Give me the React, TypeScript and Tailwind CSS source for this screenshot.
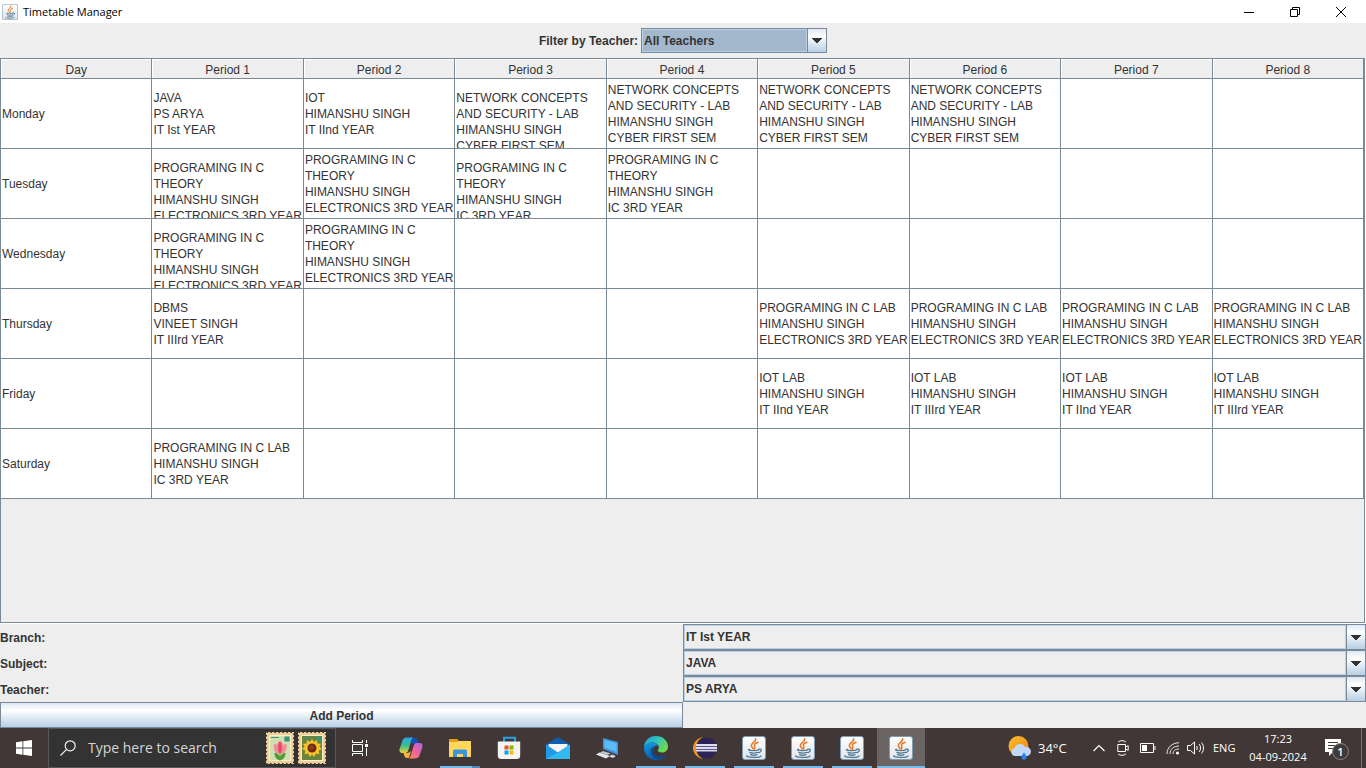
import React from "react";

const DAYS = ["Monday", "Tuesday", "Wednesday", "Thursday", "Friday", "Saturday"];
const PERIODS = [1, 2, 3, 4, 5, 6, 7, 8];

type Entry = { lines: string[]; spill?: boolean };

const LAB = ["NETWORK CONCEPTS", "AND SECURITY - LAB", "HIMANSHU SINGH", "CYBER FIRST SEM"];
const C_THEORY = ["PROGRAMING IN C", "THEORY", "HIMANSHU SINGH", "ELECTRONICS 3RD YEAR"];
const C_THEORY_IC = ["PROGRAMING IN C", "THEORY", "HIMANSHU SINGH", "IC 3RD YEAR"];
const C_LAB = ["PROGRAMING IN C LAB", "HIMANSHU SINGH", "ELECTRONICS 3RD YEAR"];
const IOT_2 = ["IOT LAB", "HIMANSHU SINGH", "IT IInd YEAR"];
const IOT_3 = ["IOT LAB", "HIMANSHU SINGH", "IT IIIrd YEAR"];

const SCHEDULE: Record<string, Record<number, Entry>> = {
  Monday: {
    1: { lines: ["JAVA", "PS ARYA", "IT Ist YEAR"] },
    2: { lines: ["IOT", "HIMANSHU SINGH", "IT IInd YEAR"] },
    3: { lines: LAB, spill: true },
    4: { lines: LAB },
    5: { lines: LAB },
    6: { lines: LAB },
  },
  Tuesday: {
    1: { lines: C_THEORY, spill: true },
    2: { lines: C_THEORY },
    3: { lines: C_THEORY_IC, spill: true },
    4: { lines: C_THEORY_IC },
  },
  Wednesday: {
    1: { lines: C_THEORY, spill: true },
    2: { lines: C_THEORY },
  },
  Thursday: {
    1: { lines: ["DBMS", "VINEET SINGH", "IT IIIrd YEAR"] },
    5: { lines: C_LAB },
    6: { lines: C_LAB },
    7: { lines: C_LAB },
    8: { lines: C_LAB },
  },
  Friday: {
    5: { lines: IOT_2 },
    6: { lines: IOT_3 },
    7: { lines: IOT_2 },
    8: { lines: IOT_3 },
  },
  Saturday: {
    1: { lines: ["PROGRAMING IN C LAB", "HIMANSHU SINGH", "IC 3RD YEAR"] },
  },
};

function JavaIcon({ className }: { className: string }) {
  return (
    <svg viewBox="0 0 24 24" className={className} aria-hidden="true">
      <defs>
        <linearGradient id="javaTile" x1="0" y1="0" x2="0" y2="1">
          <stop offset="0" stopColor="#ffffff" />
          <stop offset="1" stopColor="#dfe5ea" />
        </linearGradient>
      </defs>
      <rect x="0.5" y="0.5" width="23" height="23" rx="2.5" fill="url(#javaTile)" stroke="#7f9db5" />
      <path d="M13.6 2.8c1.200 2.700-4.400 3.900-4.300 6.600 0 1.300 1.400 2.300 2 3.400M16 6.300c-2 .8-4.100 2-3.500 3.600.4.9 1.100 1.600-.2 3" fill="none" stroke="#e8761f" strokeWidth="1.500" strokeLinecap="round" />
      <path d="M7.500 13.300c-2 .6-1.200 1.300 4.200 1.300 2 0 3.900-.2 5-.7M7.900 16.300c2 .9 6 .8 8 .1M8.600 18.600c1.700.7 4.600.7 6.400.1M16.800 13.200c2.800-.8 3.700 2 .1 3.400M5 19.800c-1.800 1.900 13.200 2.200 14 .1" fill="none" stroke="#4f7896" strokeWidth="1.300" strokeLinecap="round" />
    </svg>
  );
}

function Combo({ id, options, selected = false }: { id: string; options: string[]; selected?: boolean }) {
  return (
    <div className="relative flex h-full w-full border border-[#7a8a99]">
      <select
        id={id}
        className={
          selected
            ? "w-full appearance-none border border-[#b8cfe5] bg-[#a3b8cc] pl-px text-xs font-bold text-[#333] outline-none"
            : "w-full appearance-none border border-[#b8cfe5] bg-[#eee] pl-px text-xs font-bold text-[#333] outline-none"
        }
      >
        {options.map((o) => (
          <option key={o}>{o}</option>
        ))}
      </select>
      <span className="pointer-events-none absolute inset-y-0 right-0 flex w-[19px] items-center justify-center border-l border-[#7a8a99] bg-linear-to-b from-[#dde8f3] via-white via-30% to-[#b8cfe5] shadow-[-1px_0_0_#b8cfe5]">
        <svg viewBox="0 0 10 5" className="h-[5px] w-2.5" aria-hidden="true">
          <path d="M0 0h10v1H9v1H8v1H7v1H6v1H4V4H3V3H2V2H1V1H0z" fill="#333" />
        </svg>
      </span>
    </div>
  );
}

function TitleBar() {
  return (
    <header className="flex h-[23px] shrink-0 items-center bg-white pl-0.5 pr-0.5 font-['Open_Sans',sans-serif] text-black">
      <JavaIcon className="size-4" />
      <h1 className="ml-[5px] flex-1 text-[11px] leading-4">Timetable Manager</h1>
      <button aria-label="Minimize" className="flex h-5 w-[46px] items-center justify-center">
        <svg viewBox="0 0 10 10" className="size-2.5" shapeRendering="crispEdges"><path d="M0 5h10v1H0z" /></svg>
      </button>
      <button aria-label="Restore" className="flex h-5 w-[46px] items-center justify-center">
        <svg viewBox="0 0 10 10" className="size-2.5" fill="none" stroke="#000"><path d="M.5 2.500h7v7h-7zM2.500 2.500v-2h7v7h-2" /></svg>
      </button>
      <button aria-label="Close" className="flex h-5 w-[46px] items-center justify-center">
        <svg viewBox="0 0 10 10" className="size-2.5" fill="none" stroke="#000"><path d="M0 0l10 10M10 0L0 10" /></svg>
      </button>
    </header>
  );
}

function Timetable() {
  return (
    <main className="flex flex-1 border-b border-r border-white">
      <div className="flex-1 border border-[#7a8a99]">
        <table className="w-full table-fixed border-separate border-spacing-0 text-xs">
          <thead>
            <tr>
              <th className="h-5 border-b border-r border-[#7a8a99] p-0 pt-0.5 font-normal leading-4 shadow-[inset_1px_1px_0_#fff]">Day</th>
              {PERIODS.map((p) => (
                <th key={p} className="h-5 border-b border-r border-[#7a8a99] p-0 pt-0.5 font-normal leading-4 shadow-[inset_1px_1px_0_#fff]">
                  Period {p}
                </th>
              ))}
            </tr>
          </thead>
          <tbody className="bg-white">
            {DAYS.map((day) => (
              <tr key={day}>
                <th scope="row" className="h-[70px] border-b border-r border-[#7a8a99] p-0 pl-px text-left align-middle font-normal leading-4">
                  {day}
                </th>
                {PERIODS.map((p) => {
                  const entry = SCHEDULE[day][p];
                  return (
                    <td key={p} className="h-[70px] border-b border-r border-[#7a8a99] p-0 pl-px">
                      {entry && (
                        <div className="flex h-[69px] items-center overflow-hidden">
                          <div className={entry.spill ? "h-12 whitespace-nowrap leading-4" : "whitespace-nowrap leading-4"}>
                            {entry.lines.map((line) => (
                              <p key={line}>{line}</p>
                            ))}
                          </div>
                        </div>
                      )}
                    </td>
                  );
                })}
              </tr>
            ))}
          </tbody>
        </table>
      </div>
    </main>
  );
}

function PeriodForm() {
  const fields = [
    { id: "branch", label: "Branch:", options: ["IT Ist YEAR", "IT IInd YEAR", "IT IIIrd YEAR"] },
    { id: "subject", label: "Subject:", options: ["JAVA", "IOT", "DBMS"] },
    { id: "teacher", label: "Teacher:", options: ["PS ARYA", "HIMANSHU SINGH", "VINEET SINGH"] },
  ];
  return (
    <form className="grid shrink-0 grid-cols-2 text-xs font-bold" onSubmit={(e) => e.preventDefault()}>
      {fields.map((f) => (
        <React.Fragment key={f.id}>
          <label htmlFor={f.id} className="flex h-[26px] items-center pt-0.5">{f.label}</label>
          <Combo id={f.id} options={f.options} />
        </React.Fragment>
      ))}
      <button className="h-[26px] border border-[#7a8a99] bg-linear-to-b from-[#dde8f3] via-white via-30% to-[#b8cfe5] pt-0.5">
        Add Period
      </button>
    </form>
  );
}

function Stamp({ flower }: { flower: "tulip" | "sunflower" }) {
  const sun = flower === "sunflower";
  return (
    <svg viewBox="0 0 28 32" className="h-8 w-7" aria-hidden="true">
      <rect width="28" height="32" fill="#efcf96" />
      <rect x=".5" y=".5" width="27" height="31" fill="none" stroke="#333" strokeDasharray="1.500 2.500" />
      <rect x="3" y="3" width="22" height="26" fill="#f7eccb" />
      <rect x="4" y="4" width="20" height="24" fill={sun ? "#68843d" : "#cfe0b4"} />
      <path d="M5 5.500h8M19 5h4v4h-4z" stroke="#3f9275" strokeWidth="1.200" fill="#3f9275" />
      {sun ? (
        <g>
          <path d="M14 7l2 3 3-2 .4 3.500 3.600.2-1.600 3.100 2.600 2.200-3.200 1.600.6 3.600-3.500-.6L16 25l-2-2.600-2 2.600-1.900-3.400-3.500.6.6-3.600L4 17l2.600-2.200L5 11.700l3.600-.2L9 8l3 2z" fill="#f8c229" />
          <circle cx="14" cy="16" r="4.500" fill="#6b2b17" />
          <circle cx="13.500" cy="15.500" r="2.300" fill="#8f3b1e" />
        </g>
      ) : (
        <g>
          <path d="M14 19v9M14 28c-4-1-5-4-5-7 3 1 5 3 5 7 0-4 2-6 5-7 0 3-1 6-5 7z" fill="#4f9a34" stroke="#4f9a34" />
          <path d="M8 12c1 0 2 .5 2.500 1.200C11 11 12.500 9.500 14 9c1.500.5 3 2 3.500 4.200C18 12.500 19 12 20.500 12c1 6-2 10-6.500 10S7 18 8 12z" fill="#f58a98" />
          <path d="M14 9c-2 3-3 9 0 13 3-4 2-10 0-13z" fill="#e34b64" />
        </g>
      )}
    </svg>
  );
}

type AppState = "idle" | "open" | "stacked" | "active";

function AppButton({ label, state = "idle", children }: { label: string; state?: AppState; children: React.ReactNode }) {
  return (
    <button
      aria-label={label}
      className={
        state === "active"
          ? "flex h-10 w-12 flex-col items-center bg-[#6a6463]"
          : "flex h-10 w-12 flex-col items-center"
      }
    >
      <span className="flex h-[38px] items-center pt-0.5">{children}</span>
      {state === "open" && <span className="h-0.5 w-10 bg-[#76b9ed]" />}
      {state === "active" && <span className="h-0.5 w-full bg-[#76b9ed]" />}
      {state === "stacked" && (
        <span className="flex h-0.5 w-10">
          <span className="flex-1 bg-[#76b9ed]" />
          <span className="w-2 bg-[#5489b3]" />
        </span>
      )}
    </button>
  );
}

function Taskbar() {
  return (
    <footer className="flex h-10 shrink-0 items-center bg-[#403736] font-['Open_Sans',sans-serif] text-white">
      <button aria-label="Start" className="flex h-10 w-12 items-center justify-center">
        <svg viewBox="0 0 16 16" className="size-4" fill="#fff"><path d="M0 2.200L6.500 1.300v6.300H0zM7.300 1.200L16 0v7.600H7.300zM0 8.400h6.500v6.300L0 13.800zM7.300 8.400H16V16l-8.700-1.200z" /></svg>
      </button>
      <div className="flex h-10 w-72 items-center border border-[#5c5756] bg-[#333] pl-[11px] pr-[9px]">
        <svg viewBox="0 0 16 16" className="size-4" fill="none" stroke="#f2f2f2" strokeWidth="1.200"><circle cx="10.200" cy="5.800" r="5" /><path d="M6.600 9.400L.5 15.500" /></svg>
        <input
          aria-label="Search"
          placeholder="Type here to search"
          className="ml-3 w-0 flex-1 bg-transparent text-sm outline-none placeholder:text-[#d6d6d6]"
        />
        <span className="flex gap-1"><Stamp flower="tulip" /><Stamp flower="sunflower" /></span>
      </div>
      <button aria-label="Task view" className="flex h-10 w-12 items-center justify-center">
        <svg viewBox="0 0 16 16" className="size-4" fill="none" stroke="#fff"><path d="M.5 0v2.500h10V0M.5 16v-2.500h10V16M.5 4.500h10v7H.5zM14.500 0v3M14.500 8v8" /><path d="M13 4h3v3h-3z" fill="#fff" stroke="none" /></svg>
      </button>
      <div className="ml-[3px] flex gap-px">
        <AppButton label="Copilot">
          <svg viewBox="0 0 24 24" className="size-6">
            <defs>
              <linearGradient id="cpA" x1="0" y1="0" x2="0" y2="1"><stop offset="0" stopColor="#2aa7f0" /><stop offset=".5" stopColor="#39bd8c" /><stop offset="1" stopColor="#ecd23b" /></linearGradient>
              <linearGradient id="cpB" x1="1" y1="0" x2="0" y2="1"><stop offset="0" stopColor="#a567e8" /><stop offset=".5" stopColor="#f0619b" /><stop offset="1" stopColor="#f8914e" /></linearGradient>
            </defs>
            <path d="M13 2h3c1.500 0 2.300 1.200 2.700 2.500L20 8h-5l-3-1z" fill="#1550b5" />
            <path d="M8.500 1.500H15c-1.500 0-2.200 1.300-2.600 2.600l-3 10C8.800 16 8 17 6 17H3.500C.5 17 0 14.800.7 12.500l2.700-7.800C4.200 2.400 5.500 1.500 8.500 1.500z" fill="url(#cpA)" />
            <path d="M10 22H8c-1.600 0-2.400-1-2.800-2.500L4.500 17H9l3-2z" fill="#f6b03d" />
            <path d="M15.500 22.500H9c1.500 0 2.200-1.300 2.600-2.600l3-10C15.200 8 16 7 18 7h2.500c3 0 3.500 2.200 2.800 4.500l-2.700 7.800c-.8 2.300-2.100 3.200-5.100 3.200z" fill="url(#cpB)" />
          </svg>
        </AppButton>
        <AppButton label="File Explorer" state="stacked">
          <svg viewBox="0 0 24 24" className="size-6"><path d="M1 3h8l2 2h11v4H1z" fill="#e5a00d" /><path d="M1 6h8l1.500-1H23v16H1z" fill="#ffd65c" /><path d="M5 21v-6q0-1.500 1.500-1.500h11q1.500 0 1.500 1.500v6h-4v-3H9v3z" fill="#3b97dc" /></svg>
        </AppButton>
        <AppButton label="Microsoft Store">
          <svg viewBox="0 0 24 24" className="size-6"><path d="M7 7V1.800h11V7" fill="none" stroke="#27a2e5" strokeWidth="2" /><path d="M.8 5.500h22.400v14q0 3.500-3.500 3.500H4.300Q.8 23 .8 19.500z" fill="#f4f4f4" /><path d="M7.500 9.500h4v4h-4z" fill="#f25022" /><path d="M12.500 9.500h4v4h-4z" fill="#7fba00" /><path d="M7.500 14.500h4v4h-4z" fill="#00a4ef" /><path d="M12.500 14.500h4v4h-4z" fill="#ffb900" /></svg>
        </AppButton>
        <AppButton label="Mail">
          <svg viewBox="0 0 24 24" className="size-6"><path d="M0 8.500L12 1l12 7.500V11H0z" fill="#0f5fae" /><path d="M2.500 8h19v8h-19z" fill="#f5f5f7" /><path d="M0 8.500l12 8 12-8V23H0z" fill="#1f9ae8" /><path d="M24 8.500V23H0l12-6.500z" fill="#35b8f1" /></svg>
        </AppButton>
        <AppButton label="Remote Desktop">
          <svg viewBox="0 0 24 24" className="size-6"><path d="M8 2l15 4v13L8 13z" fill="#3e97dc" /><path d="M9.500 4l12 3.200V16L9.500 11.500z" fill="#5bbcfa" /><path d="M8 15l8 2.500-4 1.500-7-2.500z" fill="#bcc4cb" /><path d="M4.500 16.500L15 20l-4 2.500-10-4z" fill="#e4e7e9" /><path d="M17 18.500l4 1.500-3 2-4-1.500z" fill="#d3d7da" /></svg>
        </AppButton>
        <AppButton label="Microsoft Edge" state="open">
          <svg viewBox="0 0 24 24" className="size-6">
            <defs>
              <linearGradient id="edA" x1="0" y1="0" x2="1" y2=".6"><stop offset="0" stopColor="#249edc" /><stop offset=".5" stopColor="#2fc3be" /><stop offset="1" stopColor="#6fdb4a" /></linearGradient>
              <linearGradient id="edB" x1="0" y1="0" x2="0" y2="1"><stop offset="0" stopColor="#1496df" /><stop offset="1" stopColor="#0c5cab" /></linearGradient>
            </defs>
            <path d="M0 12C0 4.500 5.500 0 12 0c7 0 12 5 12 10.500 0 4-3 6-6 6-2.500 0-4.500-1-4.200-2.200.3-.8 1-1.300 1-2.800C14.800 8.500 12 6.500 8.500 6.500 4 6.500 1 9 0 12z" fill="url(#edA)" />
            <path d="M0 12c1-4 4.500-5.500 8.500-5.500 3 0 5.300 1.500 6 3.500C12 8.500 8.500 11 8.500 14.500c0 5 6 8 12.500 5-2 3-5 4.500-9 4.500C5 24 0 19 0 12z" fill="url(#edB)" />
            <path d="M8.500 10C5 14 6.500 22 14 24 21 23 22 19 22 19c-6.500 3-13.500.5-13.500-4.500z" fill="#114a8b" />
          </svg>
        </AppButton>
        <AppButton label="Eclipse" state="open">
          <svg viewBox="0 0 24 24" className="size-6"><path d="M10 1C4 2 0 7 0 12s4 10 10 11C5 20.500 3.500 16.500 3.500 12S5 3.500 10 1z" fill="#f3941e" /><circle cx="13.500" cy="12" r="10.500" fill="#2c2255" /><path d="M3 8h21v2H3zM3 11h21v2H3zM3 14h21v1.500H3z" fill="#dedbea" /><path d="M3 10h21v1H3zM3 13h21v1H3z" fill="#5f578c" /></svg>
        </AppButton>
        <AppButton label="Java application 1" state="open"><JavaIcon className="size-6" /></AppButton>
        <AppButton label="Java application 2" state="open"><JavaIcon className="size-6" /></AppButton>
        <AppButton label="Java application 3" state="open"><JavaIcon className="size-6" /></AppButton>
        <AppButton label="Timetable Manager" state="active"><JavaIcon className="size-6" /></AppButton>
      </div>

      <div className="ml-auto flex items-center">
        <svg viewBox="0 0 24 24" className="size-6" aria-hidden="true">
          <defs><linearGradient id="sun" x1="0" y1="0" x2="1" y2="1"><stop offset="0" stopColor="#fbc02d" /><stop offset="1" stopColor="#f07f13" /></linearGradient></defs>
          <circle cx="10.500" cy="10" r="10" fill="url(#sun)" />
          <path d="M7 20a4 4 0 01-.3-7.900A5.500 5.500 0 0117 11a4.500 4.500 0 012.500 9z" fill="#c3d7f7" />
          <path d="M16 16.500c1.500 2 2.600 3.500 2.600 5a2.700 2.700 0 01-5.300 0c0-1.500 1.200-3 2.700-5z" fill="#2684f2" />
        </svg>
        <span className="ml-1.5 w-[30px] whitespace-nowrap text-[13px] leading-5">34°C</span>
        <button aria-label="Show hidden icons" className="ml-[25px]">
          <svg viewBox="0 0 12 12" className="size-3" fill="none" stroke="#fff" strokeWidth="1.200"><path d="M.5 9L6 3.500 11.500 9" /></svg>
        </button>
        <svg viewBox="0 0 12 16" className="ml-3 h-4 w-3" fill="none" stroke="#fff"><path d="M1 2.200C3 .2 7 .2 9 2.200M1 13.800c2 2 6 2 8 0M.8 4.500h7.700v7H.8zM8.500 7l2.700-1.300v4.600L8.500 9" /></svg>
        <svg viewBox="0 0 16 10" className="ml-[11px] h-2.5 w-4" fill="none" stroke="#fff"><path d="M.5.5h13v9H.5zM15 3v4" /><path d="M2 2h5v6H2z" fill="#fff" stroke="none" /></svg>
        <svg viewBox="0 0 14 14" className="ml-2.5 size-3.5" fill="none" stroke="#e8e8e8"><path d="M1 13C1 6.500 6 1.800 13 1.800M4 13c0-5 4-8 9-8M7 13c0-3.500 2.500-5 6-5" /><circle cx="11.500" cy="12" r="1.600" fill="#fff" stroke="none" /></svg>
        <svg viewBox="0 0 18 14" className="ml-[7px] h-3.5 w-[18px]" fill="none" stroke="#fff"><path d="M.5 4.500h3L7.500 1v12L3.500 9.500h-3zM9.500 5c1 1.200 1 2.800 0 4M12 3c2 2.200 2 5.800 0 8M14.500 1.500c2.700 3 2.700 8 0 11" /></svg>
        <span className="ml-2 w-[23px] whitespace-nowrap text-[11px] leading-4">ENG</span>
        <time className="ml-3 w-[60px] whitespace-nowrap text-center text-[11px] leading-[18px]">
          17:23<br />04-09-2024
        </time>
        <button aria-label="Notifications" className="relative ml-[17px] h-6 w-6">
          <svg viewBox="0 0 24 24" className="size-6"><path d="M0 3h16v13h-8l-4 4v-4H0z" fill="#fff" /><path d="M3 6.500h10M3 9.500h10M3 12.500h7" stroke="#403736" /><circle cx="15.500" cy="15.500" r="8" fill="#403b3a" stroke="#8a8583" /></svg>
          <span className="absolute bottom-0 right-0 w-[17px] text-center text-[11px] font-semibold leading-[17px]">1</span>
        </button>
        <span className="ml-3 mr-1 h-10 w-px bg-[#787271]" />
      </div>
    </footer>
  );
}

export default function App() {
  return (
    <div className="flex min-h-screen flex-col bg-[#eee] font-['Liberation_Sans',Arial,sans-serif] text-[#333]">
      <TitleBar />
      <div className="flex h-[35px] shrink-0 items-center justify-center gap-[3px] text-xs font-bold">
        <label htmlFor="filter">Filter by Teacher:</label>
        <div className="h-[25px] w-[186px]">
          <Combo id="filter" selected options={["All Teachers", "PS ARYA", "HIMANSHU SINGH", "VINEET SINGH"]} />
        </div>
      </div>
      <Timetable />
      <PeriodForm />
      <Taskbar />
    </div>
  );
}
